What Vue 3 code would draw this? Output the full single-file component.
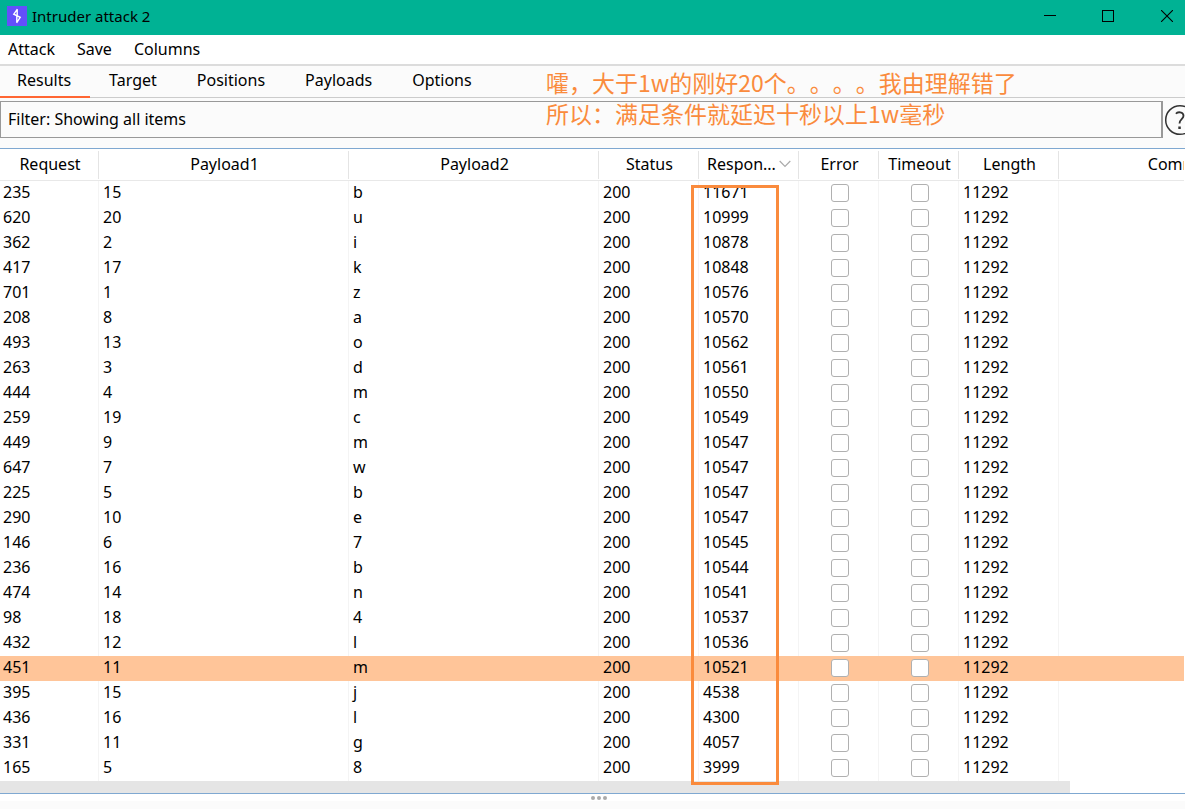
<script setup>
import { ref } from 'vue'

const menus = ['Attack', 'Save', 'Columns']
const tabs = ['Results', 'Target', 'Positions', 'Payloads', 'Options']
const activeTab = ref('Results')
const selected = ref('451')

const columns = [
  { name: 'Request', cls: 'c-request' },
  { name: 'Payload1', cls: 'c-payload' },
  { name: 'Payload2', cls: 'c-payload' },
  { name: 'Status', cls: 'c-status' },
  { name: 'Respon...', cls: 'c-status', sorted: true },
  { name: 'Error', cls: 'c-flag' },
  { name: 'Timeout', cls: 'c-flag' },
  { name: 'Length', cls: 'c-status' },
  { name: 'Comment', cls: 'c-comment' },
]

const rows = [
  ['235', '15', 'b', '11671'],
  ['620', '20', 'u', '10999'],
  ['362', '2', 'i', '10878'],
  ['417', '17', 'k', '10848'],
  ['701', '1', 'z', '10576'],
  ['208', '8', 'a', '10570'],
  ['493', '13', 'o', '10562'],
  ['263', '3', 'd', '10561'],
  ['444', '4', 'm', '10550'],
  ['259', '19', 'c', '10549'],
  ['449', '9', 'm', '10547'],
  ['647', '7', 'w', '10547'],
  ['225', '5', 'b', '10547'],
  ['290', '10', 'e', '10547'],
  ['146', '6', '7', '10545'],
  ['236', '16', 'b', '10544'],
  ['474', '14', 'n', '10541'],
  ['98', '18', '4', '10537'],
  ['432', '12', 'l', '10536'],
  ['451', '11', 'm', '10521'],
  ['395', '15', 'j', '4538'],
  ['436', '16', 'l', '4300'],
  ['331', '11', 'g', '4057'],
  ['165', '5', '8', '3999'],
]
</script>

<template>
  <div class="window">
    <header class="titlebar">
      <svg class="logo" width="20" height="20" viewBox="0 0 20 20" aria-hidden="true">
        <rect width="20" height="20" fill="#6350fb" />
        <path
          d="M10.4 3.2L6.8 8.200L13.200 11.300L9.600 16.800M10.200 3.200V9.500M9.800 16.800V10.300"
          fill="none"
          stroke="#fff"
          stroke-width="1.4"
        />
      </svg>
      <h1 class="title">Intruder attack 2</h1>
      <div class="controls">
        <button type="button" aria-label="Minimize">
          <svg width="12" height="12" viewBox="0 0 12 12"><path d="M0 5.5h12" stroke="#000" /></svg>
        </button>
        <button type="button" aria-label="Maximize">
          <svg width="12" height="12" viewBox="0 0 12 12"><rect x=".5" y=".5" width="11" height="11" fill="none" stroke="#000" /></svg>
        </button>
        <button type="button" aria-label="Close">
          <svg width="12" height="12" viewBox="0 0 12 12"><path d="M0 0l12 12M12 0L0 12" stroke="#000" stroke-width="1.1" /></svg>
        </button>
      </div>
    </header>

    <nav class="menubar">
      <button v-for="m in menus" :key="m" type="button">{{ m }}</button>
    </nav>

    <div class="tabs" role="tablist">
      <button
        v-for="t in tabs"
        :key="t"
        type="button"
        role="tab"
        :aria-selected="t === activeTab"
        :class="{ active: t === activeTab }"
        @click="activeTab = t"
      >{{ t }}</button>
    </div>

    <div class="filterbar">
      <button type="button" class="filter">Filter: Showing all items</button>
      <button type="button" class="help" aria-label="Help">
        <svg width="32" height="32" viewBox="0 0 32 32">
          <circle cx="16" cy="16" r="14.3" fill="none" stroke="#333" stroke-width="1.5" />
          <path d="M12 9.800C13.500 7.400 19.500 7.600 19.500 11.800c0 3.300-4 3.600-4 7.700" fill="none" stroke="#333" stroke-width="1.8" />
          <rect x="14.300" y="22.500" width="2.500" height="2.500" fill="#333" />
        </svg>
      </button>
    </div>

    <main class="results">
      <div class="viewport">
        <table>
          <colgroup>
            <col v-for="c in columns" :key="c.name" :class="c.cls" />
          </colgroup>
          <thead>
            <tr>
              <th v-for="c in columns" :key="c.name" scope="col">
                <span class="head" :class="{ sorted: c.sorted }">
                  {{ c.name }}
                  <svg v-if="c.sorted" width="12" height="8" viewBox="0 0 12 8" aria-hidden="true">
                    <path d="M.7 1l5.300 5.500L11.300 1" fill="none" stroke="#aaa" stroke-width="1.2" />
                  </svg>
                </span>
              </th>
            </tr>
          </thead>
          <tbody>
            <tr v-for="r in rows" :key="r[0]" :class="{ selected: r[0] === selected }" @click="selected = r[0]">
              <td>{{ r[0] }}</td>
              <td>{{ r[1] }}</td>
              <td>{{ r[2] }}</td>
              <td>200</td>
              <td>{{ r[3] }}</td>
              <td class="flag"><input type="checkbox" :aria-label="'Error for request ' + r[0]" /></td>
              <td class="flag"><input type="checkbox" :aria-label="'Timeout for request ' + r[0]" /></td>
              <td>11292</td>
              <td></td>
            </tr>
          </tbody>
        </table>
      </div>
      <div class="scrollbar"><div class="thumb"></div></div>
      <div class="marker"></div>
    </main>

    <div class="splitter"><i></i><i></i><i></i></div>

    <p class="note">嚯，大于1w的刚好20个。。。。我由理解错了<br />所以：满足条件就延迟十秒以上1w毫秒</p>
  </div>
</template>

<style>
body {
  margin: 0;
  background: #fbfbfb;
}
</style>

<style scoped>
.window {
  position: relative;
  min-height: 100vh;
  overflow: hidden;
  display: flex;
  flex-direction: column;
  background: #fbfbfb;
  color: #000;
  font: 16px/24px "Noto Sans", "Noto Sans CJK SC", sans-serif;
}
button {
  margin: 0;
  padding: 0;
  border: 0;
  background: none;
  color: inherit;
  font: inherit;
}
svg {
  display: block;
}
.titlebar {
  display: flex;
  align-items: center;
  height: 35px;
  background: #00b294;
}
.logo {
  margin: 0 5px 3px 7px;
}
.title {
  flex: 1;
  margin: 0 0 4px;
  font-size: 15px;
  font-weight: 400;
}
.controls {
  display: flex;
  align-self: flex-start;
  height: 32px;
}
.controls button {
  display: grid;
  place-items: center;
  width: 58px;
}
.controls button:last-child {
  width: 60px;
  margin-right: -12px;
}
.menubar {
  display: flex;
  gap: 22px;
  height: 29px;
  padding: 0 8px;
  background: #fff;
  border-bottom: 2px solid #dcdcdc;
}
.menubar button,
.tabs button {
  line-height: 28px;
}
.menubar button {
  padding-bottom: 2px;
}
.tabs {
  display: flex;
  height: 31px;
  border-bottom: 1px solid #ccc;
}
.tabs button {
  height: 32px;
  padding: 0 21px 2px 19px;
  border-bottom: 2px solid transparent;
}
.tabs button:first-child {
  padding: 0 19px 2px 17px;
}
.tabs .active {
  border-color: #ff6633;
}
.filterbar {
  display: flex;
  align-items: center;
  padding: 3px 0 10px;
}
.filter {
  flex: 1;
  height: 37px;
  padding: 0 7px 2px;
  border: 1px solid #999;
  border-right-width: 2px;
  text-align: left;
}
.help {
  width: 22px;
  padding-left: 1px;
  overflow: hidden;
}
.results {
  position: relative;
  border-top: 1px solid #7fa8d1;
  border-bottom: 1px solid #7fa8d1;
  background: #fff;
}
.viewport {
  overflow: hidden;
  margin-right: 1px;
}
table {
  width: 100%;
  min-width: 1310px;
  table-layout: fixed;
  border-collapse: separate;
  border-spacing: 0;
}
.c-request {
  width: 99px;
}
.c-payload {
  width: 250px;
}
.c-status {
  width: 100px;
}
.c-flag {
  width: 80px;
}
th {
  height: 28px;
  padding: 2px 0 1px;
  border-bottom: 1px solid #e8e8e8;
  font-weight: 400;
}
.head {
  display: block;
  height: 28px;
  padding-left: 2px;
  line-height: 26px;
  border-right: 1px solid #e4e4e4;
}
.sorted {
  display: flex;
  align-items: center;
  justify-content: space-between;
  height: 26px;
  padding: 0 7px 2px 8px;
}
td {
  height: 25px;
  padding: 0 0 2px 4px;
  border-right: 1px solid #f4f4f4;
  box-sizing: border-box;
  line-height: 23px;
}
td:first-child {
  padding-left: 3px;
}
.flag {
  padding: 0 0 1px 2px;
}
.flag input {
  appearance: none;
  display: block;
  width: 18px;
  height: 18px;
  margin: 0 auto;
  border: 1px solid #b0b0b0;
  border-radius: 3px;
  background: #fff;
}
.selected td {
  background: #ffc599;
  border-color: #ffc599;
}
.scrollbar {
  height: 12px;
  margin-right: 1px;
}
.thumb {
  width: 90.4%;
  height: 12px;
  background: #e5e5e5;
}
.marker {
  position: absolute;
  top: 36px;
  left: 691px;
  bottom: 8px;
  width: 88px;
  box-sizing: border-box;
  border: 3px solid #fa8b3d;
  pointer-events: none;
}
.splitter {
  display: flex;
  justify-content: center;
  align-items: center;
  gap: 2px;
  height: 7px;
  padding-left: 12px;
  background: #fff;
}
.splitter i {
  width: 4px;
  height: 4px;
  border-radius: 2px;
  background: #aaa;
}
.note {
  position: absolute;
  top: 67px;
  left: 546px;
  margin: 0;
  color: #fa8b3d;
  font: 23px/31px "Noto Sans CJK SC", sans-serif;
  text-spacing-trim: space-all;
  white-space: nowrap;
  pointer-events: none;
}
</style>
